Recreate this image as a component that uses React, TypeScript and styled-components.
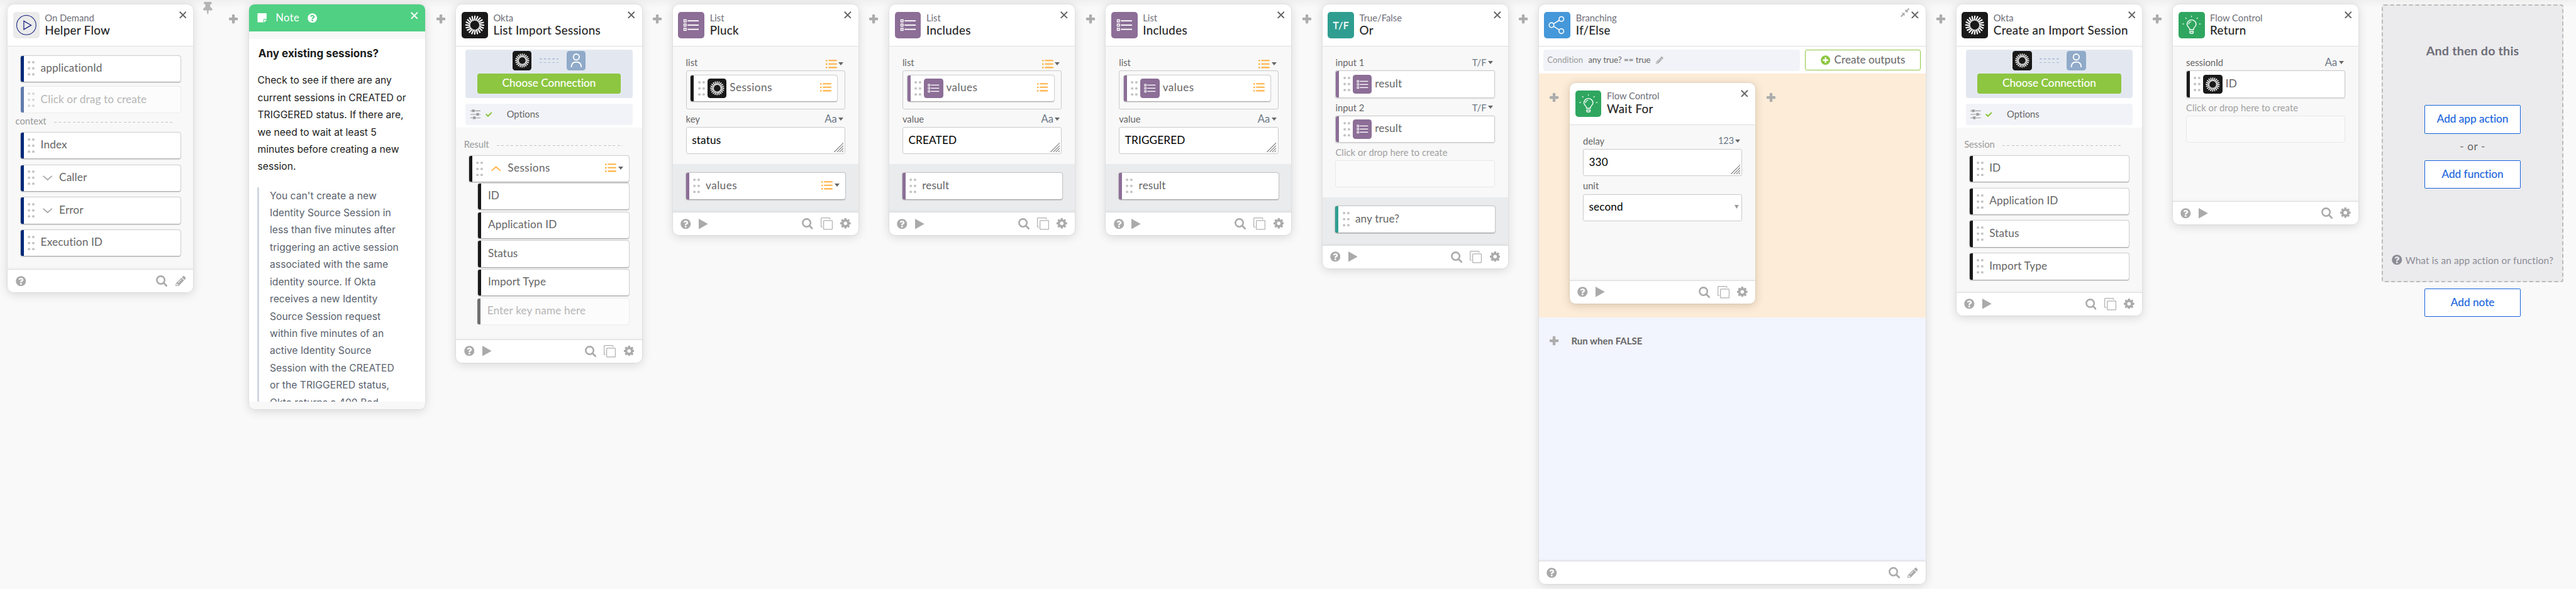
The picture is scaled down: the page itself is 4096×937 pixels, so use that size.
import React from "react";
import styled, { createGlobalStyle, css } from "styled-components";
import { FaQuestionCircle, FaPencilAlt, FaThumbtack, FaStickyNote, FaPlusCircle, FaCheck } from "react-icons/fa";

/* The root font size follows the window, so that 1rem is 1/66.62 of its width. */
const GlobalStyle = createGlobalStyle`
  html { font-size: calc(100vw / 66.62); }
  body { margin: 0; background: #f9f9f9; overflow: hidden; }
  * { box-sizing: border-box; }
  svg { display: block; flex: none; }
`;

const color = {
  navy: "#00297a",
  black: "#191919",
  purple: "#8c6e97",
  teal: "#2f9e90",
  blue: "#4598d9",
  green: "#2fa65f",
  lime: "#8dc641",
  orange: "#ffb142",
  icon: "#aaaaaa",
  link: "#1662dd",
};

const Page = styled.main`
  display: flex;
  align-items: flex-start;
  height: 100vh;
  padding: 0.11rem 0 0 0.2rem;
  overflow: hidden;
  background: linear-gradient(#f0f0f0, #f9f9f9 0.2rem);
  font-family: Lato, "Open Sans", sans-serif;
  font-size: 0.28rem;
  font-variant-ligatures: none;
  color: #666;
  white-space: nowrap;
`;

/* ---------- icons ---------- */

const IconBox = styled.div<{ $bg: string; $small?: boolean }>`
  flex: none;
  display: flex;
  align-items: center;
  justify-content: center;
  width: ${(p) => (p.$small ? "0.5rem" : "0.68rem")};
  height: ${(p) => (p.$small ? "0.5rem" : "0.68rem")};
  border-radius: ${(p) => (p.$small ? "0.07rem" : "0.08rem")};
  background: ${(p) => p.$bg};
  svg {
    width: 100%;
    height: 100%;
  }
`;

const BoxLetters = styled.span`
  font-size: 0.25rem;
  letter-spacing: 0.01rem;
  line-height: 0.3rem;
  margin-left: 0.01rem;
  color: #fff;
  -webkit-text-stroke: 0.3px #fff;
`;

const Sunburst = () => (
  <svg viewBox="0 0 68 68">
    <g stroke="#fff" strokeWidth="3.5">
      {Array.from({ length: 20 }, (_, i) => (
        <line key={i} x1="32.8" y1="22.4" x2="34.6" y2="9.4" transform={`rotate(${i * 18} 34 34)`} />
      ))}
    </g>
  </svg>
);

const OnDemandIcon = () => (
  <svg viewBox="0 0 68 68" fill="none" stroke="#14217f">
    <circle cx="34" cy="34" r="25" strokeWidth="1.7" />
    <path d="M27.5 23.4V45.4L46.5 34.4Z" strokeWidth="2" />
  </svg>
);

const ListIcon = () => (
  <svg viewBox="0 0 68 68">
    {[23, 34, 45].map((y) => (
      <g key={y}>
        <rect x="15.5" y={y - 2.8} width="5.6" height="5.6" fill="none" stroke="#fff" strokeWidth="2.4" />
        <rect x="24.8" y={y - 1.5} width="29" height="3" fill="#fff" />
      </g>
    ))}
  </svg>
);

const BranchIcon = () => (
  <svg viewBox="0 0 68 68" fill="none" stroke="#fff" strokeWidth="2.6">
    <circle cx="45" cy="18.3" r="6.2" />
    <circle cx="19.5" cy="34" r="6.2" />
    <circle cx="45" cy="49.8" r="6.2" />
    <path d="M24.8 30.7L39.7 21.6M24.8 37.3L39.7 46.5" />
  </svg>
);

const BulbIcon = () => (
  <svg viewBox="0 0 68 68" fill="none" stroke="#fff" strokeWidth="2.3" strokeLinecap="round">
    <path d="M28.6 46V43.6C27.8 40.2 21.9 37 21.9 32.3a11.8 11.8 0 0 1 23.6 0C45.5 37 39.6 40.2 38.8 43.6V46Z" strokeLinejoin="round" />
    <path d="M26.2 31.5a7.5 7.5 0 0 1 6-6.3" strokeWidth="2" />
    <path d="M29.1 50.4H38.3V53L36.8 55.3H30.6L29.1 53Z" strokeLinejoin="round" />
    <path d="M33.7 10.3V12.8M18.2 15.3L20 17.1M49.2 15.3L47.4 17.1M11 31H13.6M53.9 31H56.5" strokeWidth="1.9" />
  </svg>
);

const UserIcon = () => (
  <svg viewBox="0 0 50 50" fill="none" stroke="#fff" strokeWidth="3">
    <circle cx="25" cy="15.8" r="7.6" />
    <path d="M12.2 42.5C12.2 33 17.5 28.6 25 28.6S37.8 33 37.8 42.5" />
  </svg>
);

type Kind = "demand" | "okta" | "list" | "tf" | "branch" | "flow";

const Glyph = ({ kind, small }: { kind: Kind; small?: boolean }) => {
  const table: Record<Kind, [string, React.ReactNode]> = {
    demand: ["#ebebeb", <OnDemandIcon />],
    okta: [color.black, <Sunburst />],
    list: [color.purple, <ListIcon />],
    tf: [color.teal, <BoxLetters>T/F</BoxLetters>],
    branch: [color.blue, <BranchIcon />],
    flow: [color.green, <BulbIcon />],
  };
  const [bg, drawing] = table[kind];
  return (
    <IconBox $bg={bg} $small={small}>
      {drawing}
    </IconBox>
  );
};

const CloseSvg = styled.svg<{ $light?: boolean }>`
  width: 0.19rem;
  height: 0.19rem;
  stroke: ${(p) => (p.$light ? "#fff" : "#666")};
`;
const Close = ({ light }: { light?: boolean }) => (
  <CloseSvg $light={light} viewBox="0 0 19 19" fill="none" strokeWidth="3.2">
    <path d="M1.2 1.2L17.8 17.8M17.8 1.2L1.2 17.8" />
  </CloseSvg>
);

const CollapseSvg = styled.svg`
  width: 0.23rem;
  height: 0.23rem;
`;
const Collapse = () => (
  <CollapseSvg viewBox="0 0 23 23" fill={color.icon} stroke={color.icon}>
    <path d="M12.4 2.5V10.6H20.5Z" stroke="none" />
    <path d="M10.6 20.5V12.4H2.5Z" stroke="none" />
    <path d="M15 8L22 1M8 15L1 22" strokeWidth="3.4" />
  </CollapseSvg>
);

const PlusSvg = styled.svg`
  width: 0.23rem;
  height: 0.23rem;
`;
const Plus = () => (
  <PlusSvg viewBox="0 0 23 23" fill="#acacac">
    <rect x="0" y="8" width="23" height="7" rx="1.5" />
    <rect x="8" y="0" width="7" height="23" rx="1.5" />
  </PlusSvg>
);

const DotsSvg = styled.svg`
  width: 0.18rem;
  height: 0.38rem;
`;
const Dots = () => (
  <DotsSvg viewBox="0 0 18 38" fill="#c4c4c4">
    {[3.3, 19, 34.7].map((y) => (
      <g key={y}>
        <circle cx="3.5" cy={y} r="3.3" />
        <circle cx="14.5" cy={y} r="3.3" />
      </g>
    ))}
  </DotsSvg>
);

const Chevron = styled.svg`
  width: 0.25rem;
  height: 0.14rem;
`;

const TypeListSvg = styled.svg`
  width: 0.29rem;
  height: 0.23rem;
`;
const TypeList = () => (
  <TypeListSvg viewBox="0 0 29 23" fill={color.orange}>
    {[2, 11, 20].map((y) => (
      <g key={y}>
        <rect x="0" y={y - 1.7} width="4" height="4" rx="1" />
        <rect x="7" y={y - 1.6} width="22" height="3.4" rx="1" />
      </g>
    ))}
  </TypeListSvg>
);

const CaretSvg = styled.svg`
  width: 0.13rem;
  height: 0.08rem;
`;
const Caret = () => (
  <CaretSvg viewBox="0 0 13 8" fill="#666">
    <path d="M0 0H13L6.5 8Z" />
  </CaretSvg>
);

/* ---------- card shell ---------- */

const Card = styled.section<{ $width?: string; $height?: string }>`
  flex: none;
  display: flex;
  flex-direction: column;
  width: ${(p) => p.$width ?? "4.8rem"};
  height: ${(p) => p.$height ?? "auto"};
  border-radius: 0.14rem;
  background: #f8f8f8;
  box-shadow: 0 0 0.03rem rgba(0, 0, 0, 0.12), 0 0.04rem 0.26rem rgba(0, 0, 0, 0.14);
`;

const Header = styled.header`
  flex: none;
  display: flex;
  height: 1.1rem;
  padding: 0.2rem 0.18rem 0 0.14rem;
  border-bottom: 1px solid #dedede;
  border-radius: 0.2rem 0.2rem 0 0;
  background: #fff;
`;

const Titles = styled.div`
  flex: 1;
  margin-left: 0.14rem;
  padding-top: 0.01rem;
`;

const Kicker = styled.div`
  font-size: 0.24rem;
  line-height: 0.28rem;
  color: #6e6e78;
`;

const Title = styled.h2`
  margin: 0;
  font-size: 0.305rem;
  font-weight: 400;
  line-height: 0.345rem;
  letter-spacing: 0.0055rem;
  color: #222;
  -webkit-text-stroke: 0.15px #222;
`;

const HeaderTools = styled.div`
  display: flex;
  gap: 0.05rem;
  height: 0.19rem;
  margin-top: -0.02rem;
`;

const CollapseSlot = styled.div`
  margin-top: -0.08rem;
`;

const Footer = styled.footer`
  flex: none;
  display: flex;
  align-items: center;
  height: 0.6rem;
  padding: 0 0.2rem;
  border-top: 1px solid #dcdcdc;
  border-radius: 0 0 0.2rem 0.2rem;
  background: #fff;
  box-shadow: 0 -0.03rem 0.06rem rgba(0, 0, 0, 0.035);
  color: ${color.icon};
`;

const FooterTools = styled.div`
  display: flex;
  align-items: center;
  gap: 0.2rem;
  margin-left: auto;
`;

const iconSize = css`
  width: 0.27rem;
  height: 0.27rem;
`;
const Help = styled(FaQuestionCircle)`
  ${iconSize}
`;
const GearSvg = styled.svg`
  ${iconSize}
  margin-top: -0.02rem;
`;
const Gear = () => (
  <GearSvg viewBox="0 0 27 27" fill={color.icon}>
    {[0, 45, 90, 135].map((a) => (
      <rect key={a} x="10.7" y="0" width="5.6" height="27" rx="1" transform={`rotate(${a} 13.5 13.5)`} />
    ))}
    <circle cx="13.5" cy="13.5" r="10.4" />
    <circle cx="13.5" cy="13.5" r="4.6" fill="#fff" />
  </GearSvg>
);
const Pencil = styled(FaPencilAlt)`
  ${iconSize}
`;
const Play = styled.svg`
  width: 0.24rem;
  height: 0.27rem;
  margin-left: 0.2rem;
`;
const Search = styled.svg`
  width: 0.29rem;
  height: 0.29rem;
`;
const Copy = styled.svg`
  width: 0.31rem;
  height: 0.32rem;
`;

const CardFooter = ({ run, copy, edit }: { run?: boolean; copy?: boolean; edit?: boolean }) => (
  <Footer>
    <Help />
    {run && (
      <Play viewBox="0 0 24 27" fill={color.icon}>
        <path d="M0 0L24 13.5L0 27Z" />
      </Play>
    )}
    <FooterTools>
      <Search viewBox="0 0 29 29" fill="none" stroke={color.icon}>
        <circle cx="12.3" cy="12.3" r="10.1" strokeWidth="4.2" />
        <path d="M19.5 19.5L27 27" strokeWidth="4.6" strokeLinecap="round" />
      </Search>
      {copy && (
        <Copy viewBox="0 0 31 32" fill="none" stroke="#b0b0b0" strokeWidth="2">
          <path d="M5 24.5H2.5A1.5 1.5 0 0 1 1 23V2.5A1.5 1.5 0 0 1 2.5 1H22.5A1.5 1.5 0 0 1 24 2.5V5" />
          <rect x="7.5" y="7.8" width="22.5" height="23" rx="1.5" />
        </Copy>
      )}
      {edit ? <Pencil /> : <Gear />}
    </FooterTools>
  </Footer>
);

const CardHeader = ({ kind, kicker, title, collapsible }: { kind: Kind; kicker: string; title: string; collapsible?: boolean }) => (
  <Header>
    <Glyph kind={kind} />
    <Titles>
      <Kicker>{kicker}</Kicker>
      <Title>{title}</Title>
    </Titles>
    <HeaderTools>
      {collapsible && (
        <CollapseSlot>
          <Collapse />
        </CollapseSlot>
      )}
      <Close />
    </HeaderTools>
  </Header>
);

/* ---------- rows and fields ---------- */

const Row = styled.div<{ $stripe: string; $ghost?: boolean; $bare?: boolean; $inset?: string; $flat?: boolean }>`
  flex: none;
  display: flex;
  align-items: center;
  height: 0.67rem;
  margin-left: ${(p) => p.$inset ?? 0};
  padding-left: ${(p) => (p.$bare ? "0.18rem" : "0.1rem")};
  border-left: 0.09rem solid ${(p) => p.$stripe};
  border-radius: 0.05rem;
  background: #fff;
  opacity: ${(p) => (p.$ghost ? 0.6 : 1)};
  box-shadow: ${(p) =>
    p.$flat ? "none" : p.$ghost ? "0 0 0.03rem rgba(0,0,0,.25)" : "0 0.01rem 0.03rem rgba(0,0,0,.36), 0 0 0.03rem rgba(0,0,0,.3)"};
`;

const RowText = styled.span<{ $gap?: string; $wide?: boolean; $pale?: boolean }>`
  padding-bottom: 0.04rem;
  margin-left: ${(p) => p.$gap ?? "0"};
  line-height: 0.36rem;
  letter-spacing: ${(p) => (p.$wide ? "0.007rem" : "0.002rem")};
  color: ${(p) => (p.$pale ? "#8a8a8a" : "#666")};
`;

const RowType = styled.span`
  display: flex;
  align-items: center;
  gap: 0.05rem;
  margin: -0.04rem 0.15rem 0 auto;
`;

const Stack = styled.div<{ $gap: string; $left?: string }>`
  display: flex;
  flex-direction: column;
  gap: ${(p) => p.$gap};
  margin: 0 0.335rem 0 ${(p) => p.$left ?? "0.34rem"};
`;

const ChildStack = styled(Stack)`
  margin-top: 0.05rem;
`;

const SectionLabel = styled.div`
  flex: none;
  display: flex;
  align-items: flex-start;
  gap: 0.2rem;
  height: 0.51rem;
  padding: 0.055rem 0.5rem 0 0.2rem;
  font-size: 0.24rem;
  line-height: 0.3rem;
  color: #999;
  &::after {
    content: "";
    flex: 1;
    height: 1px;
    margin-top: 0.175rem;
    background: repeating-linear-gradient(90deg, #c4c4c4 0 0.065rem, transparent 0.065rem 0.12rem);
  }
`;

const Body = styled.div<{ $top?: string }>`
  flex: 1;
  display: flex;
  flex-direction: column;
  padding-top: ${(p) => p.$top ?? "0"};
`;

const Fields = styled.div`
  flex: 1;
  padding: 0.16rem 0.34rem 0.24rem;
`;

const FieldLabel = styled.div<{ $pale?: boolean }>`
  display: flex;
  align-items: flex-end;
  height: 0.46rem;
  padding: 0 0.045rem 0.06rem 0;
  font-size: 0.24rem;
  line-height: 0.3rem;
  letter-spacing: ${(p) => (p.$pale ? "0.001rem" : "0")};
  color: ${(p) => (p.$pale ? "#a0a0a0" : "#666")};
`;

const FieldType = styled.span<{ $size?: string }>`
  display: flex;
  align-items: center;
  gap: 0.04rem;
  margin-left: auto;
  font-size: ${(p) => p.$size ?? "0.24rem"};
  color: #6b7785;
`;

const Zone = styled.div<{ $tall?: boolean; $empty?: boolean }>`
  height: ${(p) => (p.$tall ? "1rem" : "0.7rem")};
  padding: ${(p) => (p.$tall ? "0.1rem 0.19rem 0 0.11rem" : "0")};
  border: 1px solid ${(p) => (p.$empty ? "#e8e8e8" : "#cacaca")};
  border-radius: 0.05rem;
  background: ${(p) => (p.$empty ? "#fafafa" : "#f9f9f9")};
  box-shadow: ${(p) => (p.$tall || p.$empty ? "none" : "0 0.01rem 0.03rem rgba(0,0,0,.12)")};
`;

const FitZone = styled(Zone)`
  > div {
    height: 100%;
  }
`;

const Input = styled.div`
  display: flex;
  align-items: center;
  justify-content: space-between;
  height: 0.7rem;
  padding: 0 0.03rem 0.04rem 0.14rem;
  border: 1px solid #cacaca;
  border-radius: 0.05rem;
  background: #fff;
  letter-spacing: 0.002rem;
  color: #000;
`;

const Grip = styled.svg`
  align-self: flex-end;
  width: 0.25rem;
  height: 0.25rem;
  margin-bottom: -0.01rem;
`;

const SelectCaret = styled.svg`
  width: 0.11rem;
  height: 0.1rem;
  margin-right: 0.04rem;
`;

const Output = styled.div`
  flex: none;
  height: 1.24rem;
  padding: 0.24rem 0.335rem 0 0.34rem;
  background: #eaebed;
`;

const TypeMark = ({ type }: { type: string }) => (
  <FieldType $size={type === "Aa" ? "0.27rem" : type === "123" ? "0.235rem" : undefined}>
    {type === "list" ? <TypeList /> : type}
    <Caret />
  </FieldType>
);

const Label = ({ name, type, pale }: { name: string; type?: string; pale?: boolean }) => (
  <FieldLabel $pale={pale}>
    {name}
    {type && <TypeMark type={type} />}
  </FieldLabel>
);

const TextArea = ({ value }: { value: string }) => (
  <Input>
    {value}
    <Grip viewBox="0 0 25 25" fill="none" stroke="#777" strokeWidth="1.7">
      <path d="M0.5 24.5L24.5 0.5M7.5 24.5L24.5 7.5M14 24.5L24.5 14M20.5 24.5L24.5 20.5" />
    </Grip>
  </Input>
);

const DotsWrap = styled.span<{ $after: string }>`
  margin-right: ${(p) => p.$after};
`;
const DotsSlot = ({ after = "0.065rem" }: { after?: string }) => (
  <DotsWrap $after={after}>
    <Dots />
  </DotsWrap>
);

const Token = ({ kind, stripe, text, list, flat }: { kind: Kind; stripe: string; text: string; list?: boolean; flat?: boolean }) => (
  <Row $stripe={stripe} $flat={flat}>
    <DotsSlot />
    <Glyph kind={kind} small />
    <RowText $gap="0.08rem" $wide={list}>
      {text}
    </RowText>
    {list && (
      <RowType>
        <TypeList />
      </RowType>
    )}
  </Row>
);

const Item = ({ stripe, text, ghost, expandable, list, wide }: { stripe: string; text: string; ghost?: boolean; expandable?: "down" | "up"; list?: boolean; wide?: boolean }) => (
  <Row $stripe={stripe} $ghost={ghost}>
    <DotsSlot after={expandable ? "0.21rem" : "0.15rem"} />
    {expandable === "down" && (
      <Chevron viewBox="0 0 25 14" fill="none" stroke="#aaa" strokeWidth="3">
        <path d="M1 1.5L12.5 11.5L24 1.5" />
      </Chevron>
    )}
    {expandable === "up" && (
      <Chevron viewBox="0 0 25 14" fill="none" stroke={color.orange} strokeWidth="3">
        <path d="M1 12.5L12.5 2.5L24 12.5" />
      </Chevron>
    )}
    <RowText $gap={expandable ? "0.17rem" : undefined} $pale={ghost} $wide={wide}>
      {text}
    </RowText>
    {list && (
      <RowType>
        <TypeList />
        <Caret />
      </RowType>
    )}
  </Row>
);

/* ---------- connectors between the cards ---------- */

const Connector = styled.div`
  flex: none;
  display: flex;
  justify-content: center;
  width: 0.8rem;
  padding-top: 0.272rem;
`;

const PinSlot = styled.div`
  flex: none;
  width: 0.64rem;
  padding-left: 0.25rem;
  margin-top: -0.055rem;
  color: #b4b4b4;
`;
const Pin = styled(FaThumbtack)`
  width: 0.24rem;
  height: 0.32rem;
`;

const Link = () => (
  <Connector>
    <Plus />
  </Connector>
);

/* ---------- connection panel ---------- */

const ConnectionArea = styled.div`
  flex: none;
  height: 2.1rem;
  padding: 0.08rem 0.24rem 0;
  background: #fff;
`;

const ConnectionBox = styled.div`
  height: 1.24rem;
  padding: 0.03rem 0.3rem 0;
  border-radius: 0.06rem;
  background: #e3e8f0;
`;

const Pair = styled.div`
  display: flex;
  align-items: center;
  justify-content: center;
  gap: 0.2rem;
  height: 0.5rem;
`;

const Wire = styled.svg`
  width: 0.5rem;
  height: 0.12rem;
`;

const ChooseButton = styled.div`
  display: flex;
  align-items: center;
  justify-content: center;
  height: 0.52rem;
  margin-top: 0.08rem;
  padding-bottom: 0.035rem;
  border-radius: 0.06rem;
  background: ${color.lime};
  color: #fff;
  -webkit-text-stroke: 0.15px #fff;
`;

const OptionsBar = styled.div`
  display: flex;
  align-items: center;
  height: 0.54rem;
  margin-top: 0.16rem;
  padding-left: 0.12rem;
  border-radius: 0.06rem;
  background: #f2f3f8;
  font-size: 0.24rem;
`;

const Sliders = styled.svg`
  width: 0.27rem;
  height: 0.26rem;
`;
const Tick = styled(FaCheck)`
  width: 0.17rem;
  height: 0.17rem;
  margin-left: 0.125rem;
  color: ${color.lime};
`;
const OptionsText = styled.span`
  margin-left: 0.38rem;
  padding-bottom: 0.04rem;
`;

const Connection = () => (
  <ConnectionArea>
    <ConnectionBox>
      <Pair>
        <Glyph kind="okta" small />
        <Wire viewBox="0 0 50 12" stroke="#98acd0" strokeWidth="2" strokeDasharray="6 5">
          <path d="M0 1H50M0 11H50" />
        </Wire>
        <IconBox $bg="#90aac9" $small>
          <UserIcon />
        </IconBox>
      </Pair>
      <ChooseButton>Choose Connection</ChooseButton>
    </ConnectionBox>
    <OptionsBar>
      <Sliders viewBox="0 0 27 26" fill="#999">
        <path d="M0 3H27V4.8H0ZM0 12H27V13.8H0ZM0 21H27V22.8H0Z" />
        <path stroke="#f2f3f8" strokeWidth="1" d="M3.5 0H11.5V7.5H3.5ZM14.7 9H22.7V16.5H14.7ZM6 18H14V25.5H6Z" />
      </Sliders>
      <Tick />
      <OptionsText>Options</OptionsText>
    </OptionsBar>
  </ConnectionArea>
);

/* ---------- note ---------- */

const NoteHeader = styled.header`
  flex: none;
  display: flex;
  align-items: center;
  height: 0.7rem;
  padding: 0 0.19rem 0 0.22rem;
  border-radius: 0.14rem 0.14rem 0 0;
  background: #4fd083;
  color: #fff;
`;
const NoteGlyph = styled(FaStickyNote)`
  width: 0.25rem;
  height: 0.27rem;
`;
const NoteTitle = styled.span`
  margin: 0 0.215rem 0 0.22rem;
  padding-bottom: 0.02rem;
  font-size: 0.27rem;
  letter-spacing: 0.006rem;
`;
const NoteHelp = styled(FaQuestionCircle)`
  width: 0.25rem;
  height: 0.25rem;
`;
const NoteClose = styled.div`
  margin: -0.12rem 0 0 auto;
`;
const NoteBody = styled.div`
  flex: 1;
  margin: 0.2rem 0;
  padding: 0.17rem 0.22rem 0;
  overflow: hidden;
  background: #fff;
  font-family: Inter, sans-serif;
  font-size: 0.256rem;
  line-height: 0.446rem;
  color: #1d1d21;
`;
const NoteHeading = styled.h3`
  margin: 0 0 0.28rem 0.02rem;
  font-size: 0.278rem;
  font-weight: 700;
  line-height: 0.4rem;
`;
const Line = styled.div``;
const Quote = styled.blockquote`
  margin: 0.305rem 0 0;
  padding-left: 0.27rem;
  border-left: 0.06rem solid #d0d7e0;
  color: #5a626d;
`;

const noteLines = [
  "Check to see if there are any",
  "current sessions in CREATED or",
  "TRIGGERED status. If there are,",
  "we need to wait at least 5",
  "minutes before creating a new",
  "session.",
];
const quoteLines = [
  "You can't create a new",
  "Identity Source Session in",
  "less than five minutes after",
  "triggering an active session",
  "associated with the same",
  "identity source. If Okta",
  "receives a new Identity",
  "Source Session request",
  "within five minutes of an",
  "active Identity Source",
  "Session with the CREATED",
  "or the TRIGGERED status,",
  "Okta returns a 400 Bad",
];

const NoteCard = () => (
  <Card $width="4.56rem" $height="10.48rem">
    <NoteHeader>
      <NoteGlyph />
      <NoteTitle>Note</NoteTitle>
      <NoteHelp />
      <NoteClose>
        <Close light />
      </NoteClose>
    </NoteHeader>
    <NoteBody>
      <NoteHeading>Any existing sessions?</NoteHeading>
      {noteLines.map((t) => (
        <Line key={t}>{t}</Line>
      ))}
      <Quote>
        {quoteLines.map((t) => (
          <Line key={t}>{t}</Line>
        ))}
      </Quote>
    </NoteBody>
  </Card>
);

/* ---------- cards ---------- */

const HelperFlowCard = () => (
  <Card $height="7.45rem">
    <CardHeader kind="demand" kicker="On Demand" title="Helper Flow" />
    <Body $top="0.23rem">
      <Stack $gap="0.14rem">
        <Item stripe={color.navy} text="applicationId" />
        <Item stripe={color.navy} text="Click or drag to create" ghost />
      </Stack>
      <SectionLabel>context</SectionLabel>
      <Stack $gap="0.172rem">
        <Item stripe={color.navy} text="Index" />
        <Item stripe={color.navy} text="Caller" expandable="down" />
        <Item stripe={color.navy} text="Error" expandable="down" />
        <Item stripe={color.navy} text="Execution ID" />
      </Stack>
    </Body>
    <CardFooter edit />
  </Card>
);

const KeyRow = ({ text }: { text: string }) => (
  <Row $stripe={color.black} $bare>
    <RowText>{text}</RowText>
  </Row>
);

const ListImportCard = () => (
  <Card $height="9.27rem">
    <CardHeader kind="okta" kicker="Okta" title="List Import Sessions" />
    <Connection />
    <Body $top="0.21rem">
      <SectionLabel>Result</SectionLabel>
      <Stack $gap="0">
        <Item stripe={color.black} text="Sessions" expandable="up" list wide />
      </Stack>
      <ChildStack $gap="0.073rem" $left="0.56rem">
        <KeyRow text="ID" />
        <KeyRow text="Application ID" />
        <KeyRow text="Status" />
        <KeyRow text="Import Type" />
        <Row $stripe={color.black} $bare $ghost $inset="-0.02rem">
          <RowText $pale>Enter key name here</RowText>
        </Row>
      </ChildStack>
    </Body>
    <CardFooter run copy />
  </Card>
);

const ListCard = ({ title, token, label, value, output, outputList }: { title: string; token: "Sessions" | "values"; label: string; value: string; output: string; outputList?: boolean }) => (
  <Card $height="5.97rem">
    <CardHeader kind="list" kicker="List" title={title} />
    <Fields>
      <Label name="list" type="list" />
      <Zone $tall>
        <Token kind={token === "Sessions" ? "okta" : "list"} stripe={token === "Sessions" ? color.black : color.purple} text={token} list />
      </Zone>
      <Label name={label} type="Aa" />
      <TextArea value={value} />
    </Fields>
    <Output>
      <Item stripe={color.purple} text={output} list={outputList} wide={outputList} />
    </Output>
    <CardFooter run copy />
  </Card>
);

const OrCard = () => (
  <Card $height="6.83rem">
    <CardHeader kind="tf" kicker="True/False" title="Or" />
    <Fields>
      {["input 1", "input 2"].map((name) => (
        <React.Fragment key={name}>
          <Label name={name} type="T/F" />
          <FitZone>
            <Token kind="list" stripe={color.purple} text="result" flat />
          </FitZone>
        </React.Fragment>
      ))}
      <Label name="Click or drop here to create" pale />
      <Zone $empty />
    </Fields>
    <Output>
      <Item stripe={color.teal} text="any true?" />
    </Output>
    <CardFooter run copy />
  </Card>
);

/* ---------- branching ---------- */

const ConditionBar = styled.div`
  flex: none;
  display: flex;
  gap: 0.12rem;
  height: 0.7rem;
  padding: 0.08rem 0.12rem;
  background: #fff;
`;
const Condition = styled.div`
  flex: 1;
  display: flex;
  align-items: center;
  padding: 0 0 0.015rem 0.1rem;
  border-radius: 0.06rem;
  background: #f2f3f8;
  font-size: 0.215rem;
`;
const ConditionName = styled.span`
  width: 1.06rem;
  color: #999;
`;
const ConditionPencil = styled(FaPencilAlt)`
  width: 0.19rem;
  height: 0.19rem;
  margin: 0.01rem 0 0 0.14rem;
  color: ${color.icon};
`;
const CreateOutputs = styled.div`
  display: flex;
  align-items: center;
  justify-content: center;
  gap: 0.105rem;
  width: 3rem;
  height: 0.54rem;
  border: 1px solid ${color.lime};
  border-radius: 0.05rem;
  background: #fff;
  span {
    padding-bottom: 0.03rem;
  }
`;
const OutputPlus = styled(FaPlusCircle)`
  width: 0.25rem;
  height: 0.25rem;
  color: ${color.lime};
`;
const TrueLane = styled.div`
  flex: none;
  display: flex;
  align-items: flex-start;
  height: 6.3rem;
  padding-top: 0.23rem;
  background: #fcecd8;
  ${Card} {
    box-shadow: 0 0 0.03rem rgba(90, 60, 20, 0.15), 0 0.04rem 0.22rem rgba(90, 60, 20, 0.22);
  }
`;
const FalseLane = styled.div`
  flex: 1;
  display: flex;
  align-items: flex-start;
  padding-top: 0.5rem;
  background: #f2f4fe;
`;
const LaneSlot = styled.div`
  display: flex;
  justify-content: center;
  width: 0.8rem;
`;
const LaneTitle = styled.div`
  margin: -0.045rem 0 0 0.04rem;
  font-size: 0.244rem;
  font-weight: 700;
  line-height: 0.3rem;
`;

const WaitForCard = () => (
  <Card $height="5.71rem">
    <CardHeader kind="flow" kicker="Flow Control" title="Wait For" />
    <Fields>
      <Label name="delay" type="123" />
      <TextArea value="330" />
      <Label name="unit" />
      <Input>
        second
        <SelectCaret viewBox="0 0 11 10" fill="#999">
          <path d="M0 0H11L5.5 10Z" />
        </SelectCaret>
      </Input>
    </Fields>
    <CardFooter run copy />
  </Card>
);

const BranchCard = () => (
  <Card $width="10rem" $height="15rem">
    <CardHeader kind="branch" kicker="Branching" title="If/Else" collapsible />
    <ConditionBar>
      <Condition>
        <ConditionName>Condition</ConditionName>
        any true? == true
        <ConditionPencil />
      </Condition>
      <CreateOutputs>
        <OutputPlus />
        <span>Create outputs</span>
      </CreateOutputs>
    </ConditionBar>
    <TrueLane>
      <Link />
      <WaitForCard />
      <Link />
    </TrueLane>
    <FalseLane>
      <LaneSlot>
        <Plus />
      </LaneSlot>
      <LaneTitle>Run when FALSE</LaneTitle>
    </FalseLane>
    <CardFooter edit />
  </Card>
);

const CreateImportCard = () => (
  <Card $height="8.05rem">
    <CardHeader kind="okta" kicker="Okta" title="Create an Import Session" />
    <Connection />
    <Body $top="0.21rem">
      <SectionLabel>Session</SectionLabel>
      <Stack $gap="0.174rem">
        {["ID", "Application ID", "Status", "Import Type"].map((t) => (
          <Item key={t} stripe={color.black} text={t} />
        ))}
      </Stack>
    </Body>
    <CardFooter run copy />
  </Card>
);

const ReturnCard = () => (
  <Card $height="5.7rem">
    <CardHeader kind="flow" kicker="Flow Control" title="Return" />
    <Fields>
      <Label name="sessionId" type="Aa" />
      <FitZone>
        <Token kind="okta" stripe={color.black} text="ID" flat />
      </FitZone>
      <Label name="Click or drop here to create" pale />
      <Zone $empty />
    </Fields>
    <CardFooter run />
  </Card>
);

/* ---------- next step ---------- */

const NextColumn = styled.div`
  flex: none;
  display: flex;
  flex-direction: column;
  align-items: center;
  width: 4.7rem;
  margin-left: 0.6rem;
`;
const NextPanel = styled.section`
  display: flex;
  flex-direction: column;
  align-items: center;
  width: 100%;
  height: 7.2rem;
  padding-top: 0.98rem;
  border: 0.04rem dashed #bbb;
  border-radius: 0.06rem;
  background: #ebebed;
`;
const NextTitle = styled.h2`
  margin: 0 0 1.2rem;
  font-size: 0.32rem;
  font-weight: 700;
  line-height: 0.4rem;
  letter-spacing: 0.003rem;
  color: #6e6e78;
`;
const OutlineButton = styled.div`
  flex: none;
  display: flex;
  align-items: center;
  justify-content: center;
  width: 2.5rem;
  height: 0.735rem;
  padding-bottom: 0.04rem;
  border: 1px solid ${color.link};
  border-radius: 0.03rem;
  background: #fff;
  color: ${color.link};
  -webkit-text-stroke: 0.15px ${color.link};
`;
const OrText = styled.div`
  height: 0.695rem;
  padding-top: 0.15rem;
  line-height: 0.36rem;
  letter-spacing: 0.01rem;
`;
const WhatIs = styled.div`
  display: flex;
  align-items: center;
  gap: 0.08rem;
  margin-top: 1.66rem;
  font-size: 0.25rem;
  line-height: 0.36rem;
  letter-spacing: 0.0022rem;
  color: #8c8c96;
`;
const WhatHelp = styled(Help)`
  margin-top: -0.02rem;
`;
const AddNote = styled(OutlineButton)`
  margin-top: 0.16rem;
`;

const NextStep = () => (
  <NextColumn>
    <NextPanel>
      <NextTitle>And then do this</NextTitle>
      <OutlineButton>Add app action</OutlineButton>
      <OrText>- or -</OrText>
      <OutlineButton>Add function</OutlineButton>
      <WhatIs>
        <WhatHelp />
        What is an app action or function?
      </WhatIs>
    </NextPanel>
    <AddNote>Add note</AddNote>
  </NextColumn>
);

export default function App() {
  return (
    <>
      <GlobalStyle />
      <Page>
        <HelperFlowCard />
        <PinSlot>
          <Pin />
        </PinSlot>
        <Link />
        <NoteCard />
        <Link />
        <ListImportCard />
        <Link />
        <ListCard title="Pluck" token="Sessions" label="key" value="status" output="values" outputList />
        <Link />
        <ListCard title="Includes" token="values" label="value" value="CREATED" output="result" />
        <Link />
        <ListCard title="Includes" token="values" label="value" value="TRIGGERED" output="result" />
        <Link />
        <OrCard />
        <Link />
        <BranchCard />
        <Link />
        <CreateImportCard />
        <Link />
        <ReturnCard />
        <NextStep />
      </Page>
    </>
  );
}
